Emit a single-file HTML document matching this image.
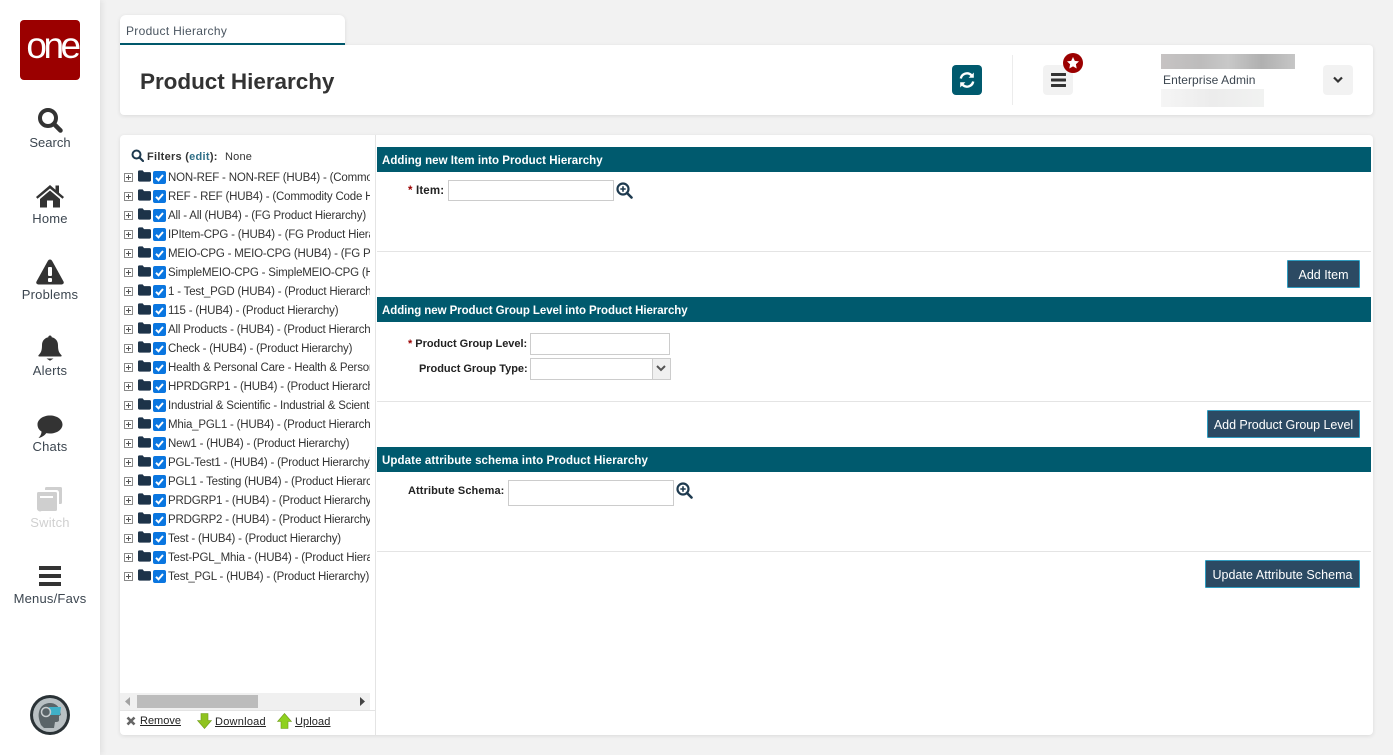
<!DOCTYPE html>
<html><head><meta charset="utf-8"><title>Product Hierarchy</title>
<style>
*{box-sizing:border-box}
html,body{margin:0;padding:0;width:1393px;height:755px;overflow:hidden;background:#f2f2f2;font-family:"Liberation Sans",sans-serif;color:#333}
.a{position:absolute}
.t{position:absolute;white-space:nowrap;line-height:16px}
#side{left:0;top:0;width:100px;height:755px;background:#fff;box-shadow:2px 0 6px rgba(0,0,0,.08)}
.nav{position:absolute;left:0;width:100px;text-align:center;font-size:13px;line-height:16px;color:#3c4650;letter-spacing:.2px}
.card{position:absolute;background:#fff;box-shadow:0 1px 4px rgba(0,0,0,.1)}
.row{position:absolute;left:124px;width:246px;height:19px}
.row .tx{position:absolute;left:44px;top:2px;width:202px;overflow:hidden;white-space:nowrap;font-size:11.5px;line-height:19px;color:#333;letter-spacing:-.19px}
.row svg{position:absolute}
.row svg:nth-child(1){left:0;top:6px}
.row svg:nth-child(2){left:14px;top:3px}
.row svg:nth-child(3){left:29px;top:4px}
.hd{position:absolute;left:377px;width:994px;height:25px;background:#005a6e;color:#fff;font-weight:bold;font-size:11.5px;line-height:25px;padding:2px 0 0 5px}
.ln{position:absolute;left:377px;width:994px;height:1px;background:#e4e4e4}
.lb{position:absolute;font-weight:bold;font-size:11px;line-height:16px;color:#222;white-space:nowrap}
.lb i{font-style:normal;color:#9b0000}
.in{position:absolute;background:#fff;border:1px solid #ccc}
.btn{position:absolute;background:#2c4a63;border:1px solid #2f9cc0;color:#fff;font-size:12.5px;text-align:center;line-height:28px;height:28px;border-radius:1px;white-space:nowrap}
.lnk{position:absolute;font-size:11px;line-height:14px;color:#222;text-decoration:underline;white-space:nowrap}
</style></head><body>
<svg width="0" height="0" style="position:absolute"><defs>
<symbol id="plus" viewBox="0 0 9 9"><rect x=".5" y=".5" width="8" height="8" fill="#fff" stroke="#8a8a8a"/><path d="M2 4.500h5M4.500 2v5" stroke="#555" fill="none"/></symbol>
<symbol id="folder" viewBox="0 0 14 12"><path d="M1.500 0H5l1.500 1.800h6A1.500 1.500 0 0 1 14 3.300v7.200A1.500 1.500 0 0 1 12.500 12h-11A1.500 1.500 0 0 1 0 10.500v-9A1.500 1.500 0 0 1 1.500 0z" fill="#1d3349"/></symbol>
<symbol id="chk" viewBox="0 0 13 13"><rect width="13" height="13" rx="2" fill="#0a76e0"/><path d="M3 6.800l2.500 2.500L10 4" stroke="#fff" stroke-width="2" fill="none"/></symbol>
<symbol id="zoom" viewBox="0 0 17 17"><circle cx="7" cy="7" r="5.500" fill="none" stroke="#1e3a4f" stroke-width="2.200"/><path d="M11 11l4.500 4.500" stroke="#1e3a4f" stroke-width="2.600" stroke-linecap="round"/><path d="M4.300 7h5.400M7 4.300v5.400" stroke="#1e3a4f" stroke-width="1.600"/></symbol>
</defs></svg>

<div id="side" class="a"></div>
<div class="a" style="left:20px;top:20px;width:60px;height:60px;background:#9b0000;border-radius:4px"></div>
<div class="t" style="left:22px;top:26px;width:60px;text-align:center;color:#fff;font-size:37px;line-height:40px;letter-spacing:-3.500px">one</div>

<svg class="a" style="left:37px;top:107px" width="26" height="26" viewBox="0 0 26 26"><circle cx="11" cy="11" r="8" fill="none" stroke="#333" stroke-width="4"/><path d="M17 17l6.500 6.500" stroke="#333" stroke-width="4.500" stroke-linecap="round"/></svg>
<div class="nav" style="top:135px;letter-spacing:0">Search</div>
<svg class="a" style="left:36px;top:184px" width="28" height="24" viewBox="0 0 28 24"><path d="M14 1L0 13l1.500 1.800L14 4.500l12.500 10.300L28 13l-5-4.200V1.500h-3.500v4.300z" fill="#333"/><path d="M14 6.500L4 15v8.500h7v-7h6v7h7V15z" fill="#333"/></svg>
<div class="nav" style="top:211px">Home</div>
<svg class="a" style="left:36px;top:259px" width="28" height="26" viewBox="0 0 28 26"><path d="M14 .5c1 0 1.600.5 2.200 1.500l11.300 20.500c.8 1.500-.2 3-1.900 3H2.400c-1.700 0-2.700-1.500-1.900-3L11.800 2c.6-1 1.200-1.500 2.200-1.500z" fill="#333"/><rect x="12" y="8" width="4" height="9" rx="1" fill="#fff"/><rect x="12" y="19" width="4" height="4" rx="1" fill="#fff"/></svg>
<div class="nav" style="top:287px">Problems</div>
<svg class="a" style="left:38px;top:335px" width="24" height="26" viewBox="0 0 24 26"><path d="M12 .5c1 0 1.700.7 1.700 1.800 4 .8 6.300 4 6.300 8 0 6 1.300 7.500 3.500 10 .4.600 0 1.200-.7 1.200H1.200c-.7 0-1.100-.6-.7-1.200 2.200-2.500 3.500-4 3.500-10 0-4 2.300-7.200 6.300-8C10.300 1.200 11 .5 12 .5z" fill="#333"/><path d="M8.500 23.500h7L12 25.800z" fill="#333"/></svg>
<div class="nav" style="top:363px">Alerts</div>
<svg class="a" style="left:37px;top:415px" width="26" height="24" viewBox="0 0 26 24"><path d="M13 .5c7 0 12.500 4 12.500 9s-5.500 9-12.500 9c-1.300 0-2.500-.1-3.700-.4C7.500 20.500 4.500 22.500 1.500 23c1.500-1.500 3-3.700 3-6.500C2 15 .5 12.500.5 9.500c0-5 5.500-9 12.500-9z" fill="#333"/></svg>
<div class="nav" style="top:439px">Chats</div>
<svg class="a" style="left:37px;top:487px" width="26" height="26" viewBox="0 0 26 26"><path d="M8 1.500A1.500 1.500 0 0 1 9.500 0h14A1.500 1.500 0 0 1 25 1.500v14a1.500 1.500 0 0 1-1.500 1.500H22V5.500A2.500 2.500 0 0 0 19.500 3H8z" fill="#cfcfcf"/><path d="M1.500 5h17A1.500 1.500 0 0 1 20 6.500v16a1.500 1.500 0 0 1-1.500 1.500h-14A3 3 0 0 1 0 21V6.500A1.500 1.500 0 0 1 1.500 5z" fill="#cfcfcf"/><rect x="3" y="9" width="13" height="2" fill="#fff"/></svg>
<div class="nav" style="top:515px;color:#d0d0d0">Switch</div>
<svg class="a" style="left:39px;top:566px" width="22" height="20" viewBox="0 0 22 20"><rect y="0" width="22" height="4" fill="#333"/><rect y="8" width="22" height="4" fill="#333"/><rect y="16" width="22" height="4" fill="#333"/></svg>
<div class="nav" style="top:591px">Menus/Favs</div>
<svg class="a" style="left:30px;top:695px" width="40" height="40" viewBox="0 0 40 40"><circle cx="20" cy="20" r="20" fill="#2a3236"/><circle cx="20" cy="20" r="17" fill="#b9c0c3"/><path d="M11 30c-2-5-3-9-2-13 1-6 6-9 11-9s9 3 10 8l1 4-2 1v4c0 2-2 2-4 2l-1 6H14z" fill="#5a6468"/><path d="M19 12h12l-1 8H20z" fill="#3fb0c8"/><circle cx="16" cy="17" r="4.500" fill="none" stroke="#c9ced0" stroke-width="1.500"/></svg>

<div class="card" style="left:120px;top:15px;width:225px;height:30px;border-radius:6px 6px 0 0;border-bottom:2px solid #005a6e"></div>
<div class="t" style="left:126px;top:23px;font-size:12px;color:#4a5560;letter-spacing:.3px">Product Hierarchy</div>

<div class="card" style="left:120px;top:45px;width:1253px;height:70px;border-radius:0 4px 4px 4px"></div>
<div class="t" style="left:140px;top:68px;font-size:22.5px;line-height:28px;font-weight:bold;color:#333;letter-spacing:-.04px">Product Hierarchy</div>

<div class="a" style="left:952px;top:65px;width:30px;height:30px;background:#005a6e;border-radius:4px"></div>
<svg class="a" style="left:959px;top:72px" width="16" height="16" viewBox="0 0 16 16"><path d="M1.800 6.500A6.300 6.300 0 0 1 12.500 3.300" fill="none" stroke="#fff" stroke-width="2.400"/><path d="M14.800 .5v5.200H9.600z" fill="#fff"/><path d="M14.200 9.500A6.300 6.300 0 0 1 3.500 12.700" fill="none" stroke="#fff" stroke-width="2.400"/><path d="M1.200 15.500v-5.200h5.200z" fill="#fff"/></svg>
<div class="a" style="left:1012px;top:55px;width:1px;height:50px;background:#ececec"></div>
<div class="a" style="left:1043px;top:65px;width:30px;height:30px;background:#f2f2f2;border-radius:4px"></div>
<svg class="a" style="left:1051px;top:73px" width="15" height="14" viewBox="0 0 15 14"><rect width="15" height="3" rx=".5" fill="#333"/><rect y="5.500" width="15" height="3" rx=".5" fill="#333"/><rect y="11" width="15" height="3" rx=".5" fill="#333"/></svg>
<svg class="a" style="left:1063px;top:53px" width="20" height="20" viewBox="0 0 20 20"><circle cx="10" cy="10" r="10" fill="#9b0000"/><path d="M10 4l1.800 3.900 4.200.5-3.100 2.900.8 4.200L10 13.400l-3.700 2.100.8-4.200L4 8.400l4.200-.5z" fill="#fff"/></svg>
<div class="a" style="left:1161px;top:54px;width:134px;height:15px;background:linear-gradient(90deg,#c6c3c3,#bdbcbc 30%,#c8c8c8 50%,#b0b0b0 75%,#c6c6c6)"></div>
<div class="t" style="left:1163px;top:72px;font-size:12px;color:#3c4650;letter-spacing:.07px">Enterprise Admin</div>
<div class="a" style="left:1161px;top:89px;width:103px;height:18px;background:linear-gradient(90deg,#f5f5f5,#ececec 50%,#f1f2f1)"></div>
<div class="a" style="left:1323px;top:65px;width:30px;height:30px;background:#f2f2f2;border-radius:4px"></div>
<svg class="a" style="left:1333px;top:76px" width="10" height="8" viewBox="0 0 10 8"><path d="M1 1.500l4 4 4-4" fill="none" stroke="#333" stroke-width="2.200"/></svg>

<div class="card" style="left:120px;top:135px;width:1253px;height:600px;border-radius:4px"></div>
<div class="a" style="left:375px;top:135px;width:1px;height:600px;background:#e4e4e4"></div>

<svg class="a" style="left:131px;top:149px" width="13" height="13" viewBox="0 0 13 13"><circle cx="5.500" cy="5.500" r="4" fill="none" stroke="#1e3a4f" stroke-width="2"/><path d="M8.500 8.500l3.500 3.500" stroke="#1e3a4f" stroke-width="2.200" stroke-linecap="round"/></svg>
<div class="t" style="left:147px;top:149px;font-size:11px;font-weight:bold;color:#333;letter-spacing:.27px">Filters (<span style="color:#2f6f87">edit</span>):</div>
<div class="t" style="left:225px;top:149px;font-size:11px;color:#333;letter-spacing:.2px">None</div>

<div class="row" style="top:167px"><svg width="9" height="9"><use href="#plus"/></svg><svg width="13" height="12"><use href="#folder"/></svg><svg width="13" height="13"><use href="#chk"/></svg><div class="tx">NON-REF - NON-REF (HUB4) - (Commodity Code Hierarchy)</div></div>
<div class="row" style="top:186px"><svg width="9" height="9"><use href="#plus"/></svg><svg width="13" height="12"><use href="#folder"/></svg><svg width="13" height="13"><use href="#chk"/></svg><div class="tx">REF - REF (HUB4) - (Commodity Code Hierarchy)</div></div>
<div class="row" style="top:205px"><svg width="9" height="9"><use href="#plus"/></svg><svg width="13" height="12"><use href="#folder"/></svg><svg width="13" height="13"><use href="#chk"/></svg><div class="tx">All - All (HUB4) - (FG Product Hierarchy)</div></div>
<div class="row" style="top:224px"><svg width="9" height="9"><use href="#plus"/></svg><svg width="13" height="12"><use href="#folder"/></svg><svg width="13" height="13"><use href="#chk"/></svg><div class="tx">IPItem-CPG - (HUB4) - (FG Product Hierarchy)</div></div>
<div class="row" style="top:243px"><svg width="9" height="9"><use href="#plus"/></svg><svg width="13" height="12"><use href="#folder"/></svg><svg width="13" height="13"><use href="#chk"/></svg><div class="tx">MEIO-CPG - MEIO-CPG (HUB4) - (FG Product Hierarchy)</div></div>
<div class="row" style="top:262px"><svg width="9" height="9"><use href="#plus"/></svg><svg width="13" height="12"><use href="#folder"/></svg><svg width="13" height="13"><use href="#chk"/></svg><div class="tx">SimpleMEIO-CPG - SimpleMEIO-CPG (HUB4)</div></div>
<div class="row" style="top:281px"><svg width="9" height="9"><use href="#plus"/></svg><svg width="13" height="12"><use href="#folder"/></svg><svg width="13" height="13"><use href="#chk"/></svg><div class="tx">1 - Test_PGD (HUB4) - (Product Hierarchy)</div></div>
<div class="row" style="top:300px"><svg width="9" height="9"><use href="#plus"/></svg><svg width="13" height="12"><use href="#folder"/></svg><svg width="13" height="13"><use href="#chk"/></svg><div class="tx">115 - (HUB4) - (Product Hierarchy)</div></div>
<div class="row" style="top:319px"><svg width="9" height="9"><use href="#plus"/></svg><svg width="13" height="12"><use href="#folder"/></svg><svg width="13" height="13"><use href="#chk"/></svg><div class="tx">All Products - (HUB4) - (Product Hierarchy)</div></div>
<div class="row" style="top:338px"><svg width="9" height="9"><use href="#plus"/></svg><svg width="13" height="12"><use href="#folder"/></svg><svg width="13" height="13"><use href="#chk"/></svg><div class="tx">Check - (HUB4) - (Product Hierarchy)</div></div>
<div class="row" style="top:357px"><svg width="9" height="9"><use href="#plus"/></svg><svg width="13" height="12"><use href="#folder"/></svg><svg width="13" height="13"><use href="#chk"/></svg><div class="tx">Health &amp; Personal Care - Health &amp; Personal Care</div></div>
<div class="row" style="top:376px"><svg width="9" height="9"><use href="#plus"/></svg><svg width="13" height="12"><use href="#folder"/></svg><svg width="13" height="13"><use href="#chk"/></svg><div class="tx">HPRDGRP1 - (HUB4) - (Product Hierarchy)</div></div>
<div class="row" style="top:395px"><svg width="9" height="9"><use href="#plus"/></svg><svg width="13" height="12"><use href="#folder"/></svg><svg width="13" height="13"><use href="#chk"/></svg><div class="tx">Industrial &amp; Scientific - Industrial &amp; Scientific</div></div>
<div class="row" style="top:414px"><svg width="9" height="9"><use href="#plus"/></svg><svg width="13" height="12"><use href="#folder"/></svg><svg width="13" height="13"><use href="#chk"/></svg><div class="tx">Mhia_PGL1 - (HUB4) - (Product Hierarchy)</div></div>
<div class="row" style="top:433px"><svg width="9" height="9"><use href="#plus"/></svg><svg width="13" height="12"><use href="#folder"/></svg><svg width="13" height="13"><use href="#chk"/></svg><div class="tx">New1 - (HUB4) - (Product Hierarchy)</div></div>
<div class="row" style="top:452px"><svg width="9" height="9"><use href="#plus"/></svg><svg width="13" height="12"><use href="#folder"/></svg><svg width="13" height="13"><use href="#chk"/></svg><div class="tx">PGL-Test1 - (HUB4) - (Product Hierarchy)</div></div>
<div class="row" style="top:471px"><svg width="9" height="9"><use href="#plus"/></svg><svg width="13" height="12"><use href="#folder"/></svg><svg width="13" height="13"><use href="#chk"/></svg><div class="tx">PGL1 - Testing (HUB4) - (Product Hierarchy)</div></div>
<div class="row" style="top:490px"><svg width="9" height="9"><use href="#plus"/></svg><svg width="13" height="12"><use href="#folder"/></svg><svg width="13" height="13"><use href="#chk"/></svg><div class="tx">PRDGRP1 - (HUB4) - (Product Hierarchy)</div></div>
<div class="row" style="top:509px"><svg width="9" height="9"><use href="#plus"/></svg><svg width="13" height="12"><use href="#folder"/></svg><svg width="13" height="13"><use href="#chk"/></svg><div class="tx">PRDGRP2 - (HUB4) - (Product Hierarchy)</div></div>
<div class="row" style="top:528px"><svg width="9" height="9"><use href="#plus"/></svg><svg width="13" height="12"><use href="#folder"/></svg><svg width="13" height="13"><use href="#chk"/></svg><div class="tx">Test - (HUB4) - (Product Hierarchy)</div></div>
<div class="row" style="top:547px"><svg width="9" height="9"><use href="#plus"/></svg><svg width="13" height="12"><use href="#folder"/></svg><svg width="13" height="13"><use href="#chk"/></svg><div class="tx">Test-PGL_Mhia - (HUB4) - (Product Hierarchy)</div></div>
<div class="row" style="top:566px"><svg width="9" height="9"><use href="#plus"/></svg><svg width="13" height="12"><use href="#folder"/></svg><svg width="13" height="13"><use href="#chk"/></svg><div class="tx">Test_PGL - (HUB4) - (Product Hierarchy)</div></div>

<div class="a" style="left:120px;top:693px;width:250px;height:17px;background:#f0f0f0"></div>
<div class="a" style="left:137px;top:695px;width:121px;height:13px;background:#bcbcbc"></div>
<svg class="a" style="left:125px;top:697px" width="6" height="9" viewBox="0 0 6 9"><path d="M5 0v9L0 4.500z" fill="#a3a3a3"/></svg>
<svg class="a" style="left:360px;top:697px" width="6" height="9" viewBox="0 0 6 9"><path d="M0 0v9l5-4.500z" fill="#444"/></svg>
<div class="a" style="left:120px;top:710px;width:255px;height:1px;background:#e4e4e4"></div>

<svg class="a" style="left:126px;top:716px" width="10" height="10" viewBox="0 0 10 10"><path d="M1.500 1.500l7 7M8.500 1.500l-7 7" stroke="#666" stroke-width="2.600"/></svg>
<div class="lnk" style="left:140px;top:714px">Remove</div>
<svg class="a" style="left:197px;top:713px" width="15" height="16" viewBox="0 0 15 16"><path d="M4 .5h7v7h3.500L7.500 15.500.5 7.500H4z" fill="#8fc31f" stroke="#6f9a1a" stroke-width=".6"/></svg>
<div class="lnk" style="left:215px;top:715px;letter-spacing:.25px">Download</div>
<svg class="a" style="left:277px;top:713px" width="15" height="16" viewBox="0 0 15 16"><path d="M4 15.500h7v-7h3.500L7.500 .5 .5 8.500H4z" fill="#8fd11f" stroke="#6f9a1a" stroke-width=".6"/></svg>
<div class="lnk" style="left:295px;top:715px;letter-spacing:.1px">Upload</div>

<div class="hd" style="top:147px;letter-spacing:.04px">Adding new Item into Product Hierarchy</div>
<div class="lb" style="left:408px;top:183px;font-size:11.5px;letter-spacing:.15px"><i>*</i> Item:</div>
<div class="in" style="left:448px;top:180px;width:166px;height:21px"></div>
<svg class="a" style="left:616px;top:182px" width="17" height="17"><use href="#zoom"/></svg>
<div class="ln" style="top:251px"></div>
<div class="btn" style="left:1287px;top:260px;width:73px">Add Item</div>

<div class="hd" style="top:297px;letter-spacing:-.07px">Adding new Product Group Level into Product Hierarchy</div>
<div class="lb" style="left:408px;top:336px;letter-spacing:-.03px"><i>*</i> Product Group Level:</div>
<div class="in" style="left:530px;top:333px;width:140px;height:22px"></div>
<div class="lb" style="left:419px;top:361px;letter-spacing:-.03px">Product Group Type:</div>
<div class="in" style="left:530px;top:358px;width:141px;height:22px"></div>
<div class="a" style="left:652px;top:359px;width:18px;height:20px;background:#f0f0f0;border-left:1px solid #ccc"></div>
<svg class="a" style="left:656px;top:365px" width="10" height="7" viewBox="0 0 10 7"><path d="M1 1l4 4 4-4" fill="none" stroke="#555" stroke-width="2"/></svg>
<div class="ln" style="top:401px"></div>
<div class="btn" style="left:1207px;top:410px;width:153px;letter-spacing:-.05px">Add Product Group Level</div>

<div class="hd" style="top:447px;letter-spacing:.1px">Update attribute schema into Product Hierarchy</div>
<div class="lb" style="left:408px;top:483px;letter-spacing:.1px">Attribute Schema:</div>
<div class="in" style="left:508px;top:480px;width:166px;height:26px"></div>
<svg class="a" style="left:676px;top:482px" width="17" height="17"><use href="#zoom"/></svg>
<div class="ln" style="top:551px"></div>
<div class="btn" style="left:1205px;top:560px;width:155px;letter-spacing:.05px">Update Attribute Schema</div>
</body></html>
